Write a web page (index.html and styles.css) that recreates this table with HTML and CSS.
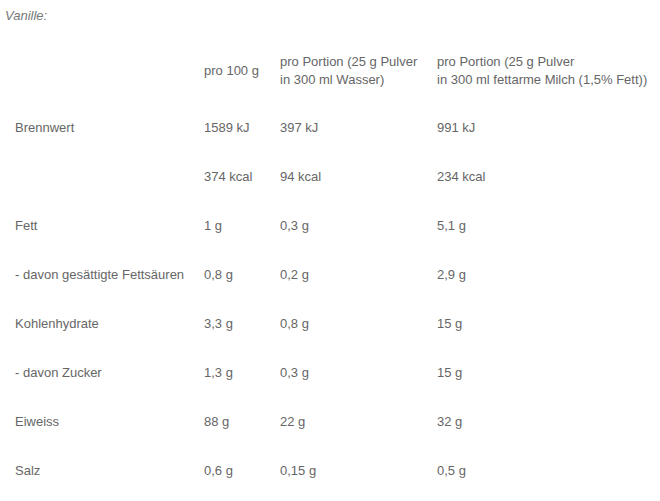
FILE: index.html
```html
<!DOCTYPE html>
<html lang="de">
<head>
<meta charset="utf-8">
<title>Nährwerte Vanille</title>
<link rel="stylesheet" href="styles.css">
</head>
<body>
<p class="flavor">Vanille:</p>
<table class="nutri">
  <colgroup>
    <col class="c1"><col class="c2"><col class="c3"><col class="c4">
  </colgroup>
  <thead>
    <tr class="head">
      <th></th>
      <th>pro 100 g</th>
      <th>pro Portion (25 g Pulver<br>in 300 ml Wasser)</th>
      <th>pro Portion (25 g Pulver<br>in 300 ml fettarme Milch (1,5% Fett))</th>
    </tr>
  </thead>
  <tbody>
    <tr><td>Brennwert</td><td>1589 kJ</td><td>397 kJ</td><td>991 kJ</td></tr>
    <tr><td></td><td>374 kcal</td><td>94 kcal</td><td>234 kcal</td></tr>
    <tr><td>Fett</td><td>1 g</td><td>0,3 g</td><td>5,1 g</td></tr>
    <tr><td>- davon gesättigte Fettsäuren</td><td>0,8 g</td><td>0,2 g</td><td>2,9 g</td></tr>
    <tr><td>Kohlenhydrate</td><td>3,3 g</td><td>0,8 g</td><td>15 g</td></tr>
    <tr><td>- davon Zucker</td><td>1,3 g</td><td>0,3 g</td><td>15 g</td></tr>
    <tr><td>Eiweiss</td><td>88 g</td><td>22 g</td><td>32 g</td></tr>
    <tr><td>Salz</td><td>0,6 g</td><td>0,15 g</td><td>0,5 g</td></tr>
  </tbody>
</table>
</body>
</html>
```
FILE: styles.css
```css
html, body {
  margin: 0;
  padding: 0;
  background: #fff;
}
body {
  font-family: "Liberation Sans", Arial, sans-serif;
  font-size: 13px;
  line-height: 18px;
  color: #666;
}
.flavor {
  margin: 0;
  padding: 7px 0 0 5px;
  height: 31px;
  font-style: italic;
  color: #777;
}
.nutri {
  border-collapse: collapse;
  margin-left: 5px;
  table-layout: fixed;
  width: 655px;
}
.c1 { width: 189px; }
.c2 { width: 76px; }
.c3 { width: 157px; }
.c4 { width: 233px; }
.nutri th,
.nutri td {
  padding: 0 0 0 10px;
  text-align: left;
  font-weight: normal;
  vertical-align: middle;
  white-space: nowrap;
}
.nutri .head th {
  height: 65px;
}
.nutri td {
  height: 49px;
}
```
